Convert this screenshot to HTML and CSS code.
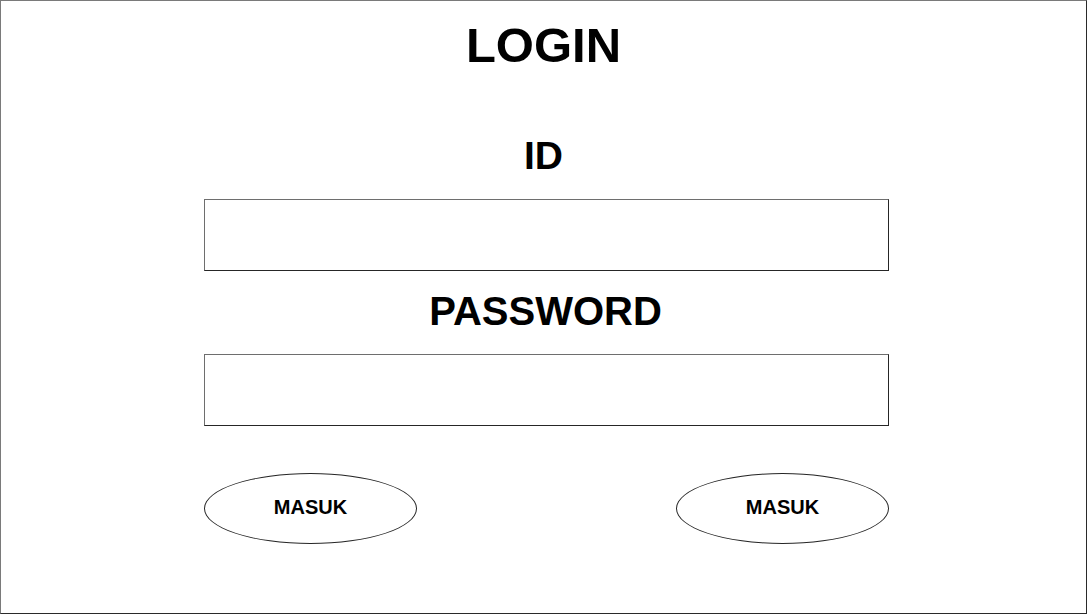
FILE: index.html
```html
<!DOCTYPE html>
<html lang="id">
<head>
<meta charset="utf-8">
<title>Login</title>
<link rel="stylesheet" href="styles.css">
</head>
<body>
<div class="frame">
  <h1 class="title">LOGIN</h1>
  <div class="label label-id">ID</div>
  <div class="field"></div>
  <div class="label label-pw">PASSWORD</div>
  <div class="field field-pw"></div>
  <div class="actions">
    <div class="oval">MASUK</div>
    <div class="oval">MASUK</div>
  </div>
</div>
</body>
</html>
```

FILE: styles.css
```css
html, body {
  margin: 0;
  padding: 0;
  background: #ffffff;
}

body {
  font-family: "Liberation Sans", Arial, sans-serif;
  color: #000000;
}

.frame {
  box-sizing: border-box;
  width: 1087px;
  height: 614px;
  border: 1px solid;
  border-color: #7a7a7a #2a2a2a #2a2a2a #7a7a7a;
  display: flex;
  flex-direction: column;
  padding-top: 20px;
}

.title {
  margin: 0;
  align-self: center;
  font-size: 49px;
  line-height: 49px;
  font-weight: bold;
}

.label {
  align-self: center;
  font-weight: bold;
}

.label-id {
  margin-top: 66px;
  font-size: 39px;
  line-height: 39px;
}

.label-pw {
  margin-top: 20px;
  margin-left: 4px;
  font-size: 40px;
  line-height: 40px;
}

.field {
  box-sizing: border-box;
  width: 685px;
  height: 72px;
  margin-left: 203px;
  margin-top: 24px;
  border: 1px solid;
  border-color: #6e6e6e #262626 #262626 #6e6e6e;
}

.field-pw {
  margin-top: 23px;
}

.actions {
  width: 685px;
  margin-left: 203px;
  margin-top: 47px;
  display: flex;
  justify-content: space-between;
}

.oval {
  box-sizing: border-box;
  width: 213px;
  height: 71px;
  border: 1px solid #262626;
  border-radius: 50%;
  display: flex;
  align-items: center;
  justify-content: center;
  font-size: 20px;
  font-weight: bold;
  line-height: 20px;
  padding-bottom: 3px;
}
```
